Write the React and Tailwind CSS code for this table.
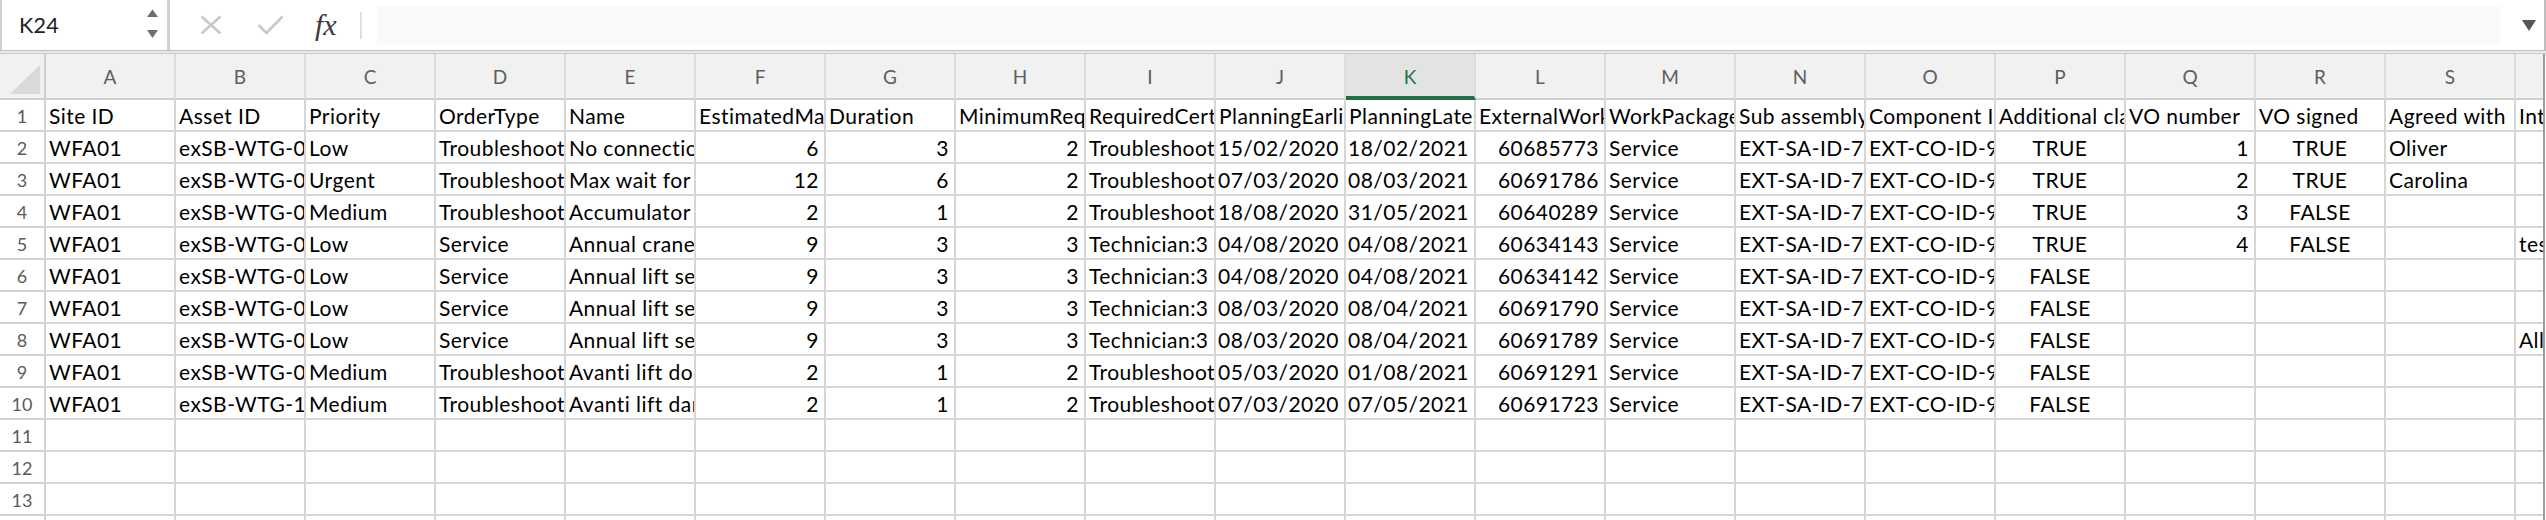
import React from "react";

const COLS = ["A","B","C","D","E","F","G","H","I","J","K","L","M","N","O","P","Q","R","S","T"];

const HEAD = ["Site ID","Asset ID","Priority","OrderType","Name","EstimatedManHours","Duration","MinimumRequiredTechnicians","RequiredCertificates","PlanningEarliestStart","PlanningLatestEnd","ExternalWorkOrderNumber","WorkPackageName","Sub assembly ID","Component ID","Additional claim","VO number","VO signed","Agreed with","Internal comment"];

const SA = "EXT-SA-ID-7834";
const CO = "EXT-CO-ID-9812";

const DATA = [
  HEAD,
  ["WFA01","exSB-WTG-03","Low","Troubleshooting","No connection with turbine","6","3","2","Troubleshooting:2","15/02/2020","18/02/2021","60685773","Service",SA,CO,"TRUE","1","TRUE","Oliver",""],
  ["WFA01","exSB-WTG-05","Urgent","Troubleshooting","Max wait for hoist","12","6","2","Troubleshooting:2","07/03/2020","08/03/2021","60691786","Service",SA,CO,"TRUE","2","TRUE","Carolina",""],
  ["WFA01","exSB-WTG-07","Medium","Troubleshooting","Accumulator pressure low","2","1","2","Troubleshooting:2","18/08/2020","31/05/2021","60640289","Service",SA,CO,"TRUE","3","FALSE","",""],
  ["WFA01","exSB-WTG-02","Low","Service","Annual crane service","9","3","3","Technician:3","04/08/2020","04/08/2021","60634143","Service",SA,CO,"TRUE","4","FALSE","","test"],
  ["WFA01","exSB-WTG-02","Low","Service","Annual lift service","9","3","3","Technician:3","04/08/2020","04/08/2021","60634142","Service",SA,CO,"FALSE","","","",""],
  ["WFA01","exSB-WTG-04","Low","Service","Annual lift service","9","3","3","Technician:3","08/03/2020","08/04/2021","60691790","Service",SA,CO,"FALSE","","","",""],
  ["WFA01","exSB-WTG-06","Low","Service","Annual lift service","9","3","3","Technician:3","08/03/2020","08/04/2021","60691789","Service",SA,CO,"FALSE","","","","All good"],
  ["WFA01","exSB-WTG-08","Medium","Troubleshooting","Avanti lift door","2","1","2","Troubleshooting:2","05/03/2020","01/08/2021","60691291","Service",SA,CO,"FALSE","","","",""],
  ["WFA01","exSB-WTG-10","Medium","Troubleshooting","Avanti lift damaged","2","1","2","Troubleshooting:2","07/03/2020","07/05/2021","60691723","Service",SA,CO,"FALSE","","","",""],
  Array(20).fill(""),
  Array(20).fill(""),
  Array(20).fill(""),
  Array(20).fill(""),
];

const ALIGN = {
  left: "text-left pl-[3px]",
  right: "text-right pr-[5px]",
  center: "text-center",
};

function alignOf(v) {
  if (v === "TRUE" || v === "FALSE") return "center";
  if (/^\d+$/.test(v) || /^\d\d\/\d\d\/\d{4}$/.test(v)) return "right";
  return "left";
}

function FormulaBar() {
  return (
    <div className="flex h-[50px] items-center bg-white">
      <div className="flex h-full w-[170px] shrink-0 items-center border-l-2 border-r-[3px] border-[#d0d0d0] bg-white">
        <span className="ml-[17px] text-[21.5px] tracking-[0.3px] text-[#222]">K24</span>
        <svg className="ml-auto mr-[8px]" width="13" height="32" viewBox="0 0 13 32">
          <polygon points="1,8 12,8 6.5,0.5" fill="#6e6e6e" />
          <polygon points="1,21 12,21 6.5,29" fill="#6e6e6e" />
        </svg>
      </div>
      <svg className="ml-[30px] shrink-0" width="22" height="20" viewBox="0 0 22 20">
        <path d="M1.5 1.5 L20.5 18.5 M20.5 1.5 L1.5 18.5" stroke="#c8c8c8" strokeWidth="2.6" fill="none" />
      </svg>
      <svg className="ml-[35px] shrink-0" width="27" height="20" viewBox="0 0 27 20">
        <path d="M1.5 10 L9.5 18 L25.5 1.5" stroke="#c8c8c8" strokeWidth="2.6" fill="none" />
      </svg>
      <span className="ml-[31px] w-[30px] shrink-0 font-['Liberation_Serif',serif] text-[30px] italic leading-none text-[#3a3a3a]">fx</span>
      <div className="ml-[15px] h-[27px] w-[2px] shrink-0 bg-[#dfdfdf]" />
      <div className="ml-[15px] h-[38px] flex-1 bg-[#fafafa]" />
      <svg className="ml-[22px] mr-[8px] shrink-0" width="14" height="11" viewBox="0 0 14 11">
        <polygon points="0,0 14,0 7,11" fill="#555" />
      </svg>
      <div className="h-full w-[2px] shrink-0 bg-[#bdbdbd]" />
    </div>
  );
}

function HeaderRow() {
  return (
    <div className="flex h-[46px] w-max bg-[#f1f1f1]">
      <div className="relative h-[46px] w-[46px] shrink-0 border-b-2 border-r-2 border-[#cfcfcf]">
        <svg className="absolute left-[10px] top-[11px]" width="30" height="29" viewBox="0 0 30 29">
          <polygon points="30,0 30,29 0,29" fill="#d9d9d9" />
        </svg>
      </div>
      {COLS.map((c) =>
        c === "K" ? (
          <div
            key={c}
            className="flex h-[46px] w-[130px] shrink-0 items-center justify-center border-b-4 border-r-2 border-b-[#1f7145] border-r-[#dcdcdc] bg-[#e3e3e3] pt-[5px] text-[19px] text-[#217346]"
          >
            {c}
          </div>
        ) : (
          <div
            key={c}
            className="flex h-[46px] w-[130px] shrink-0 items-center justify-center border-b-2 border-r-2 border-b-[#cfcfcf] border-r-[#dcdcdc] pt-[3px] text-[19px] text-[#5e5e5e]"
          >
            {c}
          </div>
        )
      )}
    </div>
  );
}

function Row({ num, values }) {
  return (
    <div className="flex h-[32px] w-max">
      <div className="h-[32px] w-[46px] shrink-0 border-b-2 border-r-2 border-[#d3d3d3] bg-white text-center text-[18px] leading-[32px] text-[#5b5b5b]">
        {num}
      </div>
      {values.map((v, i) => (
        <div
          key={i}
          className={
            "h-[32px] w-[130px] shrink-0 overflow-hidden whitespace-nowrap border-b-2 border-r-2 border-[#d6d6d6] bg-white text-[21px] leading-[32px] tracking-[0.45px] text-black " +
            ALIGN[alignOf(v)]
          }
        >
          {v}
        </div>
      ))}
    </div>
  );
}

export default function App() {
  return (
    <div className="h-[520px] w-[2546px] overflow-hidden bg-white font-['Lato',sans-serif]">
      <FormulaBar />
      <div className="h-[4px] border-b border-t border-b-[#c9c9c9] border-t-[#bdbdbd] bg-[#e9e9e9]" />
      <div className="flex">
        <div className="w-[2543px] overflow-hidden">
          <HeaderRow />
          {DATA.map((r, i) => (
            <Row key={i} num={i + 1} values={r} />
          ))}
        </div>
        <div className="w-[2px] bg-[#9c9c9c]" />
        <div className="w-[1px] bg-white" />
      </div>
    </div>
  );
}
